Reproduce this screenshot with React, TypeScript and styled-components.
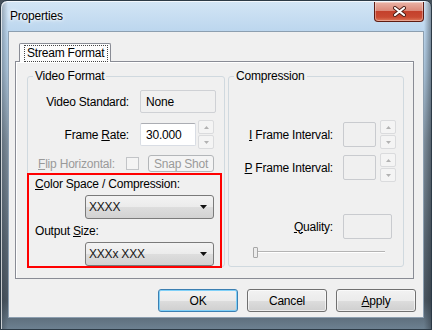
import React from 'react';
import styled, { createGlobalStyle, css } from 'styled-components';

const GlobalStyle = createGlobalStyle`
  *, *::before, *::after { box-sizing: border-box; }
  html, body {
    margin: 0;
    padding: 0;
    background: #46515b;
  }
  body {
    width: 432px;
    height: 330px;
    overflow: hidden;
    font-family: "Liberation Sans", Arial, sans-serif;
    font-size: 12px;
    letter-spacing: -0.2px;
    color: #000;
  }
`;

// ---- window chrome ----

const Window = styled.div`
  width: 432px;
  height: 330px;
  display: flex;
  flex-direction: column;
  padding: 0 7px 11px;
  border: 1px solid #2c3a46;
  border-radius: 7px 7px 0 0;
  background:
    linear-gradient(90deg, rgba(40, 48, 56, 0.35) 0px, rgba(255, 255, 255, 0) 7px, rgba(255, 255, 255, 0) 423px, rgba(40, 48, 56, 0.45) 430px),
    linear-gradient(180deg, #d3e5f5 0px, #bcd6ee 30px, #a9c2d8 70px, #7f8f9d 140px, #5b6874 240px, #4a5661 300px, #6f8394 330px);
  box-shadow: inset 1px 1px 0 rgba(255, 255, 255, 0.7);
`;

const TitleBar = styled.div`
  height: 30px;
  display: flex;
  align-items: flex-start;
  justify-content: space-between;
`;

const Title = styled.span`
  margin: 8px 0 0 2px;
  line-height: 15px;
  font-size: 12px;
  color: #000;
  text-shadow: 0 0 5px #fff, 0 0 3px #fff;
`;

const CloseButton = styled.div`
  width: 50px;
  height: 20px;
  margin-top: 1px;
  display: flex;
  align-items: center;
  justify-content: center;
  border: 1px solid #5e1b12;
  border-top: none;
  border-radius: 0 0 4px 4px;
  background: linear-gradient(180deg, #eab3a6 0%, #dc8a7a 45%, #c4412c 50%, #c94a32 80%, #df7a5c 100%);
  box-shadow: inset 0 0 0 1px rgba(255, 255, 255, 0.35);
`;

const Client = styled.div`
  flex: 1;
  display: flex;
  flex-direction: column;
  background: #f0f0f0;
  border: 1px solid #8d9fb0;
  padding: 11px 9px 5px 6px;
`;

// ---- tab control ----

const TabStrip = styled.div`
  display: flex;
  padding-left: 4px;
`;

const Tab = styled.div`
  position: relative;
  z-index: 1;
  height: 19px;
  margin-bottom: -1px;
  padding: 1px 2px 0 4px;
  border: 1px solid #898c95;
  border-bottom: none;
  border-radius: 2px 2px 0 0;
  background: #fcfcfc;
`;

const FocusText = styled.span`
  display: block;
  padding: 0 3px 0 2px;
  line-height: 15px;
  border: 1px dotted #444;
`;

const TabPanel = styled.div`
  flex: 1;
  display: grid;
  grid-template-columns: 198px 1fr;
  column-gap: 3px;
  padding: 7px 9px 11px 11px;
  border: 1px solid #898c95;
  background: #f0f0f0;
  box-shadow: inset 1px 1px 0 #fff;
`;

// ---- group boxes ----

const Group = styled.fieldset`
  margin: 0;
  padding: 0;
  min-width: 0;
  display: flex;
  flex-direction: column;
  border: 1px solid #d0d9df;
  border-radius: 3px;
`;

const Caption = styled.legend`
  margin-left: 5px;
  padding: 0 2px;
  line-height: 14px;
  font-size: 12px;
`;

const Row = styled.div<{ $top: number; $h: number; $pad?: number }>`
  display: flex;
  align-items: center;
  height: ${p => p.$h}px;
  margin-top: ${p => p.$top}px;
  padding-left: ${p => p.$pad ?? 0}px;
  flex-shrink: 0;
`;

const Label = styled.span<{ $w?: number; $disabled?: boolean; $left?: boolean; $top?: number }>`
  ${p => p.$w && css`width: ${p.$w}px;`}
  margin-top: ${p => p.$top ?? 0}px;
  flex-shrink: 0;
  text-align: ${p => (p.$left ? 'left' : 'right')};
  white-space: nowrap;
  line-height: 14px;
  color: ${p => (p.$disabled ? '#9a9a9a' : '#000')};
`;

const Box = styled.div<{ $w: number; $h: number; $kind: 'edit' | 'readonly' | 'disabled'; $gap?: number }>`
  width: ${p => p.$w}px;
  height: ${p => p.$h}px;
  margin-left: ${p => p.$gap ?? 0}px;
  flex-shrink: 0;
  display: flex;
  align-items: center;
  padding-left: 5px;
  border-radius: 2px;
  ${p =>
    p.$kind === 'edit'
      ? css`
          background: #fff;
          border: 1px solid #d9dde4;
          border-top-color: #abadb3;
        `
      : p.$kind === 'readonly'
        ? css`
            background: #f0f0f0;
            border: 1px solid #cfd1d5;
          `
        : css`
            background: #f0f0f0;
            border: 1px solid #c9cbcf;
          `}
`;

const Spin = styled.div<{ $gap: number }>`
  width: 16px;
  height: 29px;
  margin-left: ${p => p.$gap}px;
  display: flex;
  flex-direction: column;
  gap: 1px;
`;

const SpinHalf = styled.div`
  flex: 1;
  display: flex;
  align-items: center;
  justify-content: center;
  border: 1px solid #dadbdd;
  border-radius: 2px;
  background: #f4f4f4;
`;

const CheckBox = styled.div`
  width: 13px;
  height: 13px;
  flex-shrink: 0;
  border: 1px solid #c2c4c7;
  background: #f4f4f4;
`;

const SmallButton = styled.div`
  width: 66px;
  height: 17px;
  margin-left: 9px;
  display: flex;
  align-items: center;
  justify-content: center;
  border: 1px solid #b3b6b9;
  border-radius: 3px;
  background: #f4f4f4;
  color: #9a9a9a;
`;

const Highlight = styled.div`
  flex: 1;
  display: flex;
  flex-direction: column;
  margin: 1px 2px -2px -1px;
  padding: 2px 5px 0 6px;
  border: 2px solid #f00;
`;

const Combo = styled.div<{ $top: number }>`
  width: 129px;
  height: 24px;
  margin: ${p => p.$top}px 0 0 50px;
  display: flex;
  align-items: center;
  justify-content: space-between;
  padding: 0 6px 0 3px;
  border: 1px solid #7a7a7a;
  border-radius: 3px;
  background: linear-gradient(180deg, #f3f3f3 0%, #ebebeb 50%, #dddddd 51%, #d2d2d2 100%);
  color: #161616;
`;

const Slider = styled.div`
  width: 132px;
  height: 11px;
  margin: 8px 0 0 24px;
  display: flex;
  align-items: stretch;
  background: linear-gradient(180deg, transparent 4px, #b4b4b4 4px, #b4b4b4 5px, #fff 5px, #fff 6px, transparent 6px);
`;

const Thumb = styled.div`
  width: 5px;
  border: 1px solid #a7a7a7;
  border-radius: 1px;
  background: #ececec;
`;

// ---- dialog buttons ----

const ButtonRow = styled.div`
  display: flex;
  justify-content: flex-end;
  gap: 9px;
  margin: 10px -2px 0 0;
`;

const PushButton = styled.div<{ $default?: boolean }>`
  width: 80px;
  height: 23px;
  display: flex;
  align-items: center;
  justify-content: center;
  border: 1px solid ${p => (p.$default ? '#3c7fb1' : '#707070')};
  border-radius: 3px;
  background: linear-gradient(180deg, #f2f2f2 0%, #ebebeb 50%, #dddddd 51%, #cfcfcf 100%);
  box-shadow: inset 0 0 0 1px ${p => (p.$default ? '#7fd0f8' : 'rgba(255,255,255,0.6)')};
`;

const Arrow = ({ up, color, w = 5, h = 3 }: { up?: boolean; color: string; w?: number; h?: number }) => (
  <svg width={w} height={h} viewBox={`0 0 ${w} ${h}`}>
    <polygon points={up ? `0,${h} ${w},${h} ${w / 2},0` : `0,0 ${w},0 ${w / 2},${h}`} fill={color} />
  </svg>
);

const Spinner = ({ gap }: { gap: number }) => (
  <Spin $gap={gap}>
    <SpinHalf><Arrow up color="#b2b2b2" /></SpinHalf>
    <SpinHalf><Arrow color="#b2b2b2" /></SpinHalf>
  </Spin>
);

export default function App() {
  return (
    <>
      <GlobalStyle />
      <Window>
        <TitleBar>
          <Title>Properties</Title>
          <CloseButton>
            <svg width="13" height="11" viewBox="0 0 13 11">
              <path d="M2 2 L11 9 M11 2 L2 9" stroke="#4b1e16" strokeWidth="4" strokeLinecap="round" />
              <path d="M2 2 L11 9 M11 2 L2 9" stroke="#fff" strokeWidth="2.2" strokeLinecap="round" />
            </svg>
          </CloseButton>
        </TitleBar>
        <Client>
          <TabStrip>
            <Tab>
              <FocusText>Stream Format</FocusText>
            </Tab>
          </TabStrip>
          <TabPanel>
            <Group>
              <Caption>Video Format</Caption>
              <Row $top={7} $h={23}>
                <Label $w={101}>Video Standard:</Label>
                <Box $w={76} $h={23} $kind="readonly" $gap={11}>None</Box>
              </Row>
              <Row $top={7} $h={29}>
                <Label $w={101}>Frame <u>R</u>ate:</Label>
                <Box $w={56} $h={23} $kind="edit" $gap={11}>30.000</Box>
                <Spinner gap={2} />
              </Row>
              <Row $top={6} $h={17} $pad={10}>
                <Label $w={88} $left $disabled><u>F</u>lip Horizontal:</Label>
                <CheckBox />
                <SmallButton>Snap Shot</SmallButton>
              </Row>
              <Highlight>
                <Label $left><u>C</u>olor Space / Compression:</Label>
                <Combo $top={4}>
                  <span>XXXX</span>
                  <Arrow color="#111" w={7} h={4} />
                </Combo>
                <Label $left $top={5}>Output <u>S</u>ize:</Label>
                <Combo $top={4}>
                  <span>XXXx XXX</span>
                  <Arrow color="#111" w={7} h={4} />
                </Combo>
              </Highlight>
            </Group>
            <Group>
              <Caption>Compression</Caption>
              <Row $top={37} $h={29}>
                <Label $w={104}><u>I</u> Frame Interval:</Label>
                <Box $w={33} $h={25} $kind="disabled" $gap={10} />
                <Spinner gap={4} />
              </Row>
              <Row $top={4} $h={29}>
                <Label $w={104}><u>P</u> Frame Interval:</Label>
                <Box $w={33} $h={25} $kind="disabled" $gap={10} />
                <Spinner gap={4} />
              </Row>
              <Row $top={32} $h={25}>
                <Label $w={104}><u>Q</u>uality:</Label>
                <Box $w={49} $h={25} $kind="disabled" $gap={10} />
              </Row>
              <Slider>
                <Thumb />
              </Slider>
            </Group>
          </TabPanel>
          <ButtonRow>
            <PushButton $default>OK</PushButton>
            <PushButton>Cancel</PushButton>
            <PushButton><span><u>A</u>pply</span></PushButton>
          </ButtonRow>
        </Client>
      </Window>
    </>
  );
}
